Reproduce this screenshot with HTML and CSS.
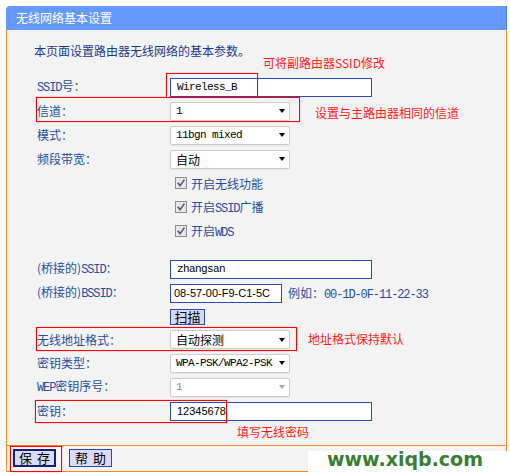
FILE: index.html
```html
<!DOCTYPE html>
<html lang="zh-CN">
<head>
<meta charset="utf-8">
<title>无线网络基本设置</title>
<link rel="stylesheet" href="styles.css">
</head>
<body>
<div class="page">
  <div class="panel">
    <div class="head">无线网络基本设置</div>
    <div class="body">
      <p class="intro">本页面设置路由器无线网络的基本参数。</p>
      <div class="form">
        <div class="row"><span class="lbl"><span class="mono-l">SSID</span>号：</span><span class="inp w-long mono">Wireless_B</span></div>
        <div class="row"><span class="lbl">信道：</span><span class="sel"><span class="mono">1</span><i class="arr"></i></span></div>
        <div class="row"><span class="lbl">模式：</span><span class="sel"><span class="mono">11bgn mixed</span><i class="arr"></i></span></div>
        <div class="row"><span class="lbl">频段带宽：</span><span class="sel"><span>自动</span><i class="arr"></i></span></div>
        <div class="row"><span class="lbl"></span><span class="cb"><svg width="12" height="12" viewBox="0 0 12 12"><rect x="0.5" y="0.5" width="11" height="11" fill="#e6e6e6" stroke="#8e8e8e"/><path d="M2.8 5.8 L5 8.6 L9.4 2.6" fill="none" stroke="#4d5b76" stroke-width="1.6"/></svg><span>开启无线功能</span></span></div>
        <div class="row"><span class="lbl"></span><span class="cb"><svg width="12" height="12" viewBox="0 0 12 12"><rect x="0.5" y="0.5" width="11" height="11" fill="#e6e6e6" stroke="#8e8e8e"/><path d="M2.8 5.8 L5 8.6 L9.4 2.6" fill="none" stroke="#4d5b76" stroke-width="1.6"/></svg><span>开启<span class="mono-l">SSID</span>广播</span></span></div>
        <div class="row"><span class="lbl"></span><span class="cb"><svg width="12" height="12" viewBox="0 0 12 12"><rect x="0.5" y="0.5" width="11" height="11" fill="#e6e6e6" stroke="#8e8e8e"/><path d="M2.8 5.8 L5 8.6 L9.4 2.6" fill="none" stroke="#4d5b76" stroke-width="1.6"/></svg><span>开启<span class="mono-l">WDS</span></span></span></div>
        <div class="spacer"></div>
        <div class="row"><span class="lbl">(桥接的)<span class="mono-l">SSID</span>：</span><span class="inp w-long mono">zhangsan</span></div>
        <div class="row"><span class="lbl">(桥接的)<span class="mono-l">BSSID</span>：</span><span class="inp w-mac sans">08-57-00-F9-C1-5C</span><span class="eg">例如：<span class="mono-l">00-1D-0F-11-22-33</span></span></div>
        <div class="row short"><span class="lbl"></span><span class="scan">扫描</span></div>
        <div class="row short"><span class="lbl">无线地址格式：</span><span class="sel"><span>自动探测</span><i class="arr"></i></span></div>
        <div class="row"><span class="lbl">密钥类型：</span><span class="sel"><span class="mono">WPA-PSK/WPA2-PSK</span><i class="arr"></i></span></div>
        <div class="row"><span class="lbl"><span class="mono-l">WEP</span>密钥序号：</span><span class="sel dis"><span class="mono">1</span><i class="arr"></i></span></div>
        <div class="row"><span class="lbl">密钥：</span><span class="inp w-long sans">12345678</span></div>
      </div>
    </div>
    <div class="foot">
      <span class="btn save"><span>保</span><span>存</span></span>
      <span class="btn"><span>帮</span><span>助</span></span>
    </div>
  </div>

  <div class="mark box-ssid"></div>
  <div class="mark box-ch"></div>
  <div class="mark box-addr"></div>
  <div class="mark box-key"></div>
  <div class="mark box-save"></div>
  <div class="note note-ssid">可将副路由器SSID修改</div>
  <div class="note note-ch">设置与主路由器相同的信道</div>
  <div class="note note-addr">地址格式保持默认</div>
  <div class="note note-key">填写无线密码</div>
  <div class="wm">www.xiqb.com</div>
</div>
</body>
</html>
```

FILE: styles.css
```css
body {
  margin: 0;
  background: #fff;
  font-family: "Noto Sans CJK SC", sans-serif;
  font-size: 12px;
}
.page {
  position: relative;
  width: 510px;
  height: 474px;
  overflow: hidden;
}
.panel {
  margin: 6px 0 0 6px;
  width: 501px;
}
.head {
  height: 24px;
  line-height: 24px;
  background: #6699ff;
  color: #fff;
  padding-left: 10px;
  border-radius: 4px 0 0 0;
  border-right: 1px solid #4b7fe6;
}
.body {
  height: 415px;
  background: #f3f3f3;
  border: 1px solid #f68b1f;
  border-top: 0;
}
.intro {
  margin: 0;
  padding: 13px 0 0 27px;
  line-height: 16px;
  color: #1a3a8e;
}
.form {
  margin-top: 16px;
  padding-left: 30px;
}
.row {
  display: flex;
  align-items: center;
  height: 24px;
}
.row.short { height: 23px; }
.spacer { height: 14px; }
.lbl {
  flex: none;
  width: 133px;
  color: #1f4fa2;
  line-height: 16px;
}
.mono {
  font-family: "Liberation Mono", monospace;
  font-size: 11px;
  letter-spacing: -0.6px;
}
.mono-l {
  font-family: "Liberation Mono", monospace;
  font-size: 12px;
  letter-spacing: -1.1px;
}
.sans {
  font-family: "Liberation Sans", sans-serif;
  font-size: 11px;
}
.inp {
  box-sizing: border-box;
  height: 19px;
  background: #fff;
  border: 1px solid #2b4db3;
  display: flex;
  align-items: center;
  padding-left: 6px;
  color: #000;
}
.w-long { width: 202px; }
.w-mac { width: 112px; padding-left: 3px; }
.eg {
  margin-left: 6px;
  color: #1f4fa2;
}
.sel {
  box-sizing: border-box;
  width: 120px;
  height: 19px;
  background: #fff;
  border: 1px solid #cbcbcb;
  border-radius: 2px;
  box-shadow: 0 1px 1px rgba(0,0,0,0.06);
  display: flex;
  align-items: center;
  justify-content: space-between;
  padding: 0 4px 0 5px;
  color: #000;
}
.arr {
  width: 0;
  height: 0;
  border-left: 3.5px solid transparent;
  border-right: 3.5px solid transparent;
  border-top: 4px solid #000;
}
.sel.dis { color: #8a8a8a; }
.sel.dis .arr { border-top-color: #a8a8a8; }
.cb {
  display: flex;
  align-items: center;
  gap: 4px;
  padding-left: 5px;
  color: #1f4fa2;
}
.cb svg { flex: none; }
.scan {
  box-sizing: border-box;
  width: 35px;
  height: 16px;
  background: #d6daf8;
  border: 1px solid #2b4db3;
  font-size: 13px;
  line-height: 14px;
  text-align: center;
  color: #000;
}
.foot {
  box-sizing: border-box;
  height: 26px;
  background: #f3f3f3;
  border: 1px solid #f68b1f;
  border-top: 0;
  display: flex;
  gap: 13px;
  padding: 3px 0 0 6px;
}
.btn {
  box-sizing: border-box;
  width: 43px;
  height: 18px;
  background: #d8dcfa;
  border: 1px solid #2448b0;
  font-size: 13px;
  line-height: 16px;
  color: #000;
  display: flex;
  justify-content: center;
  gap: 5px;
}
.btn.save {
  border: 2px solid #13217a;
  line-height: 14px;
}
.mark {
  position: absolute;
  border: 1px solid #ff0000;
  box-shadow: 0 0 1px rgba(255,0,0,0.6);
}
.box-ssid { left: 166px; top: 73px; width: 90px; height: 23px; }
.box-ch { left: 36px; top: 97px; width: 262px; height: 23px; }
.box-addr { left: 36px; top: 327px; width: 259px; height: 22px; }
.box-key { left: 35px; top: 400px; width: 190px; height: 21px; }
.box-save { left: 10px; top: 446px; width: 50px; height: 24px; }
.note {
  position: absolute;
  color: #ff1a1a;
  font-size: 12px;
  line-height: 16px;
  white-space: nowrap;
}
.note-ssid { left: 263px; top: 55px; }
.note-ch { left: 315px; top: 105px; }
.note-addr { left: 308px; top: 331px; }
.note-key { left: 237px; top: 424px; }
.wm {
  position: absolute;
  left: 308px;
  top: 451px;
  width: 202px;
  height: 23px;
  background: #fff;
  box-sizing: border-box;
  padding-left: 19px;
  font-family: "DejaVu Sans", sans-serif;
  font-weight: bold;
  font-size: 19px;
  line-height: 17px;
  color: #3b7d34;
  white-space: nowrap;
}
```
